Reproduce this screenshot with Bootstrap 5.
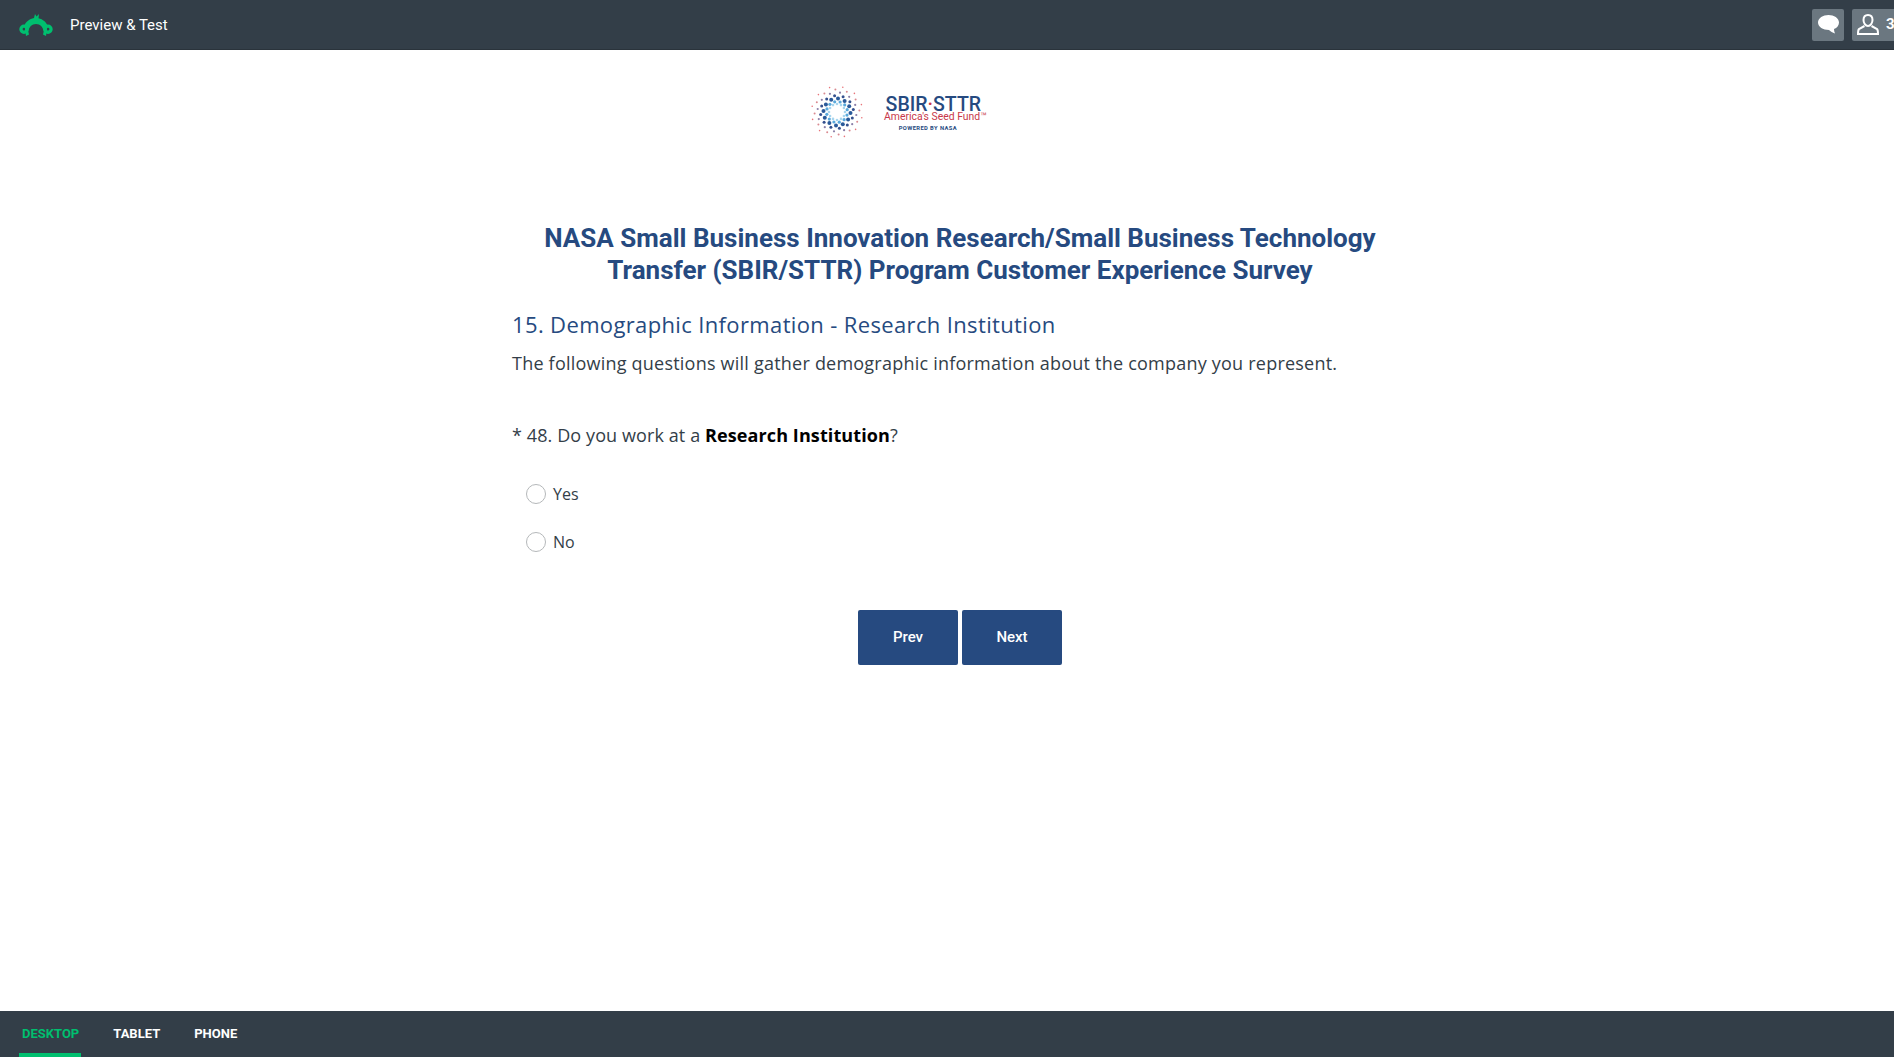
<!DOCTYPE html>
<html lang="en">
<head>
    <meta charset="UTF-8">
    <meta name="viewport" content="width=device-width, initial-scale=1.0">
    <title>Preview &amp; Test</title>
    <link href="https://cdn.jsdelivr.net/npm/bootstrap@5.3.0/dist/css/bootstrap.min.css" rel="stylesheet">
    <style>
        html, body { height: 100%; overflow: hidden; }
        body { font-family: "Open Sans", sans-serif; background: #fff; color: #333e48; }
        .page-frame { width: 1920px; height: 1057px; }
        .top-strip { height: 50px; background: #333e48; border-bottom: 1px solid #2a333b; padding-left: 18px; }
        .strip-title { font-family: Roboto, sans-serif; font-size: 15px; color: #fff; margin-left: 16px; margin-top: 1px; }
        .tool-btn { height: 32px; background: #6b7780; border-radius: 2px; color: #fff; }
        .tool-chat { width: 32px; margin-right: 8px; }
        .tool-people { width: 64px; margin-right: 4px; padding-left: 5px; font-family: Roboto, sans-serif; font-size: 15px; font-weight: 700; gap: 7px; }
        .exit-link { font-family: Roboto, sans-serif; font-size: 13px; color: #264a80; text-decoration: none; right: 0; top: 65px; width: 26px; }
        .logo-row { height: 134px; padding: 34px 0 0 809px; }
        .logo-text { margin-left: 19px; margin-top: 13px; text-align: center; }
        .logo-name { font-family: Roboto, sans-serif; font-size: 19.5px; line-height: 15px; font-weight: 500; color: #264a80; margin-right: 4px; }
        .logo-name i { color: #c8384a; font-style: normal; }
        .logo-tag { font-family: Roboto, sans-serif; font-size: 10.4px; line-height: 10px; color: #c8384a; white-space: nowrap; }
        .logo-sub { font-family: Roboto, sans-serif; font-size: 5.8px; line-height: 6px; font-weight: 700; color: #264a80; margin: 3px 15px 0 0; letter-spacing: .4px; }
        .survey-col { width: 896px; margin: 0 auto; }
        .survey-title { font-family: Roboto, sans-serif; font-size: 26px; line-height: 32px; font-weight: 700; color: #264a80; text-align: center; margin: 38px 0 0; }
        .page-heading { font-size: 22px; line-height: 28px; font-weight: 400; letter-spacing: .36px; color: #264a80; margin: 24px 0 0; }
        .page-intro { font-size: 18px; line-height: 26px; letter-spacing: .22px; color: #333e48; margin: 12px 0 0; }
        .question-line { font-size: 18px; line-height: 26px; letter-spacing: .1px; color: #333e48; margin: 46px 0 0; }
        .question-line b { color: #000; }
        .answers { margin: 36px 0 0 14px; gap: 28px; }
        .answer-row { height: 20px; gap: 7px; font-size: 16px; color: #333e48; }
        .radio-ring { width: 20px; height: 20px; border: 1.5px solid #b5b8ba; border-radius: 50%; background: #fff; }
        .nav-btns { margin-top: 58px; gap: 4px; }
        .survey-btn { width: 100px; height: 55px; background: #264a80; border: 0; border-radius: 2px; color: #fff; font-size: 15px; font-weight: 500; font-family: Roboto, sans-serif; }
        .survey-btn:hover { background: #264a80; color: #fff; }
        .bottom-strip { height: 46px; background: #333e48; padding-left: 19px; gap: 32px; }
        .device-tab { font-family: Roboto, sans-serif; font-size: 13px; font-weight: 700; color: #fff; text-decoration: none; line-height: 46px; height: 46px; }
        .device-tab.is-on { color: #00bf6f; border-bottom: 4px solid #00bf6f; padding: 0 2px 0 3px; }
        .device-tab.is-last { margin-left: 2px; }
    </style>
</head>
<body>
    <div class="page-frame d-flex flex-column position-relative">
        <header class="top-strip d-flex align-items-center flex-shrink-0">
            <svg width="36" height="24" viewBox="0 0 36 24">
                <path fill="#00bf6f" d="M17 1l1.500 2.500L21 1l-.5 4.200c4.500 1 7.800 4 9 7.300L28 23l-3-1.500.7-3c-.6-4.500-3.500-7.500-7.700-7.500s-7.100 3-7.700 7.500l.7 3L8 23 6.500 12.500c1.300-3.500 5-6.700 9.500-7.400z"/>
                <path fill="#00bf6f" fill-rule="evenodd" d="M6 11.500a4.700 4.700 0 1 0 0 9.400a4.700 4.700 0 1 0 0-9.400zM6 14.800a1.400 1.400 0 1 1 0 2.800a1.400 1.400 0 1 1 0-2.800zM30 11.500a4.700 4.700 0 1 0 0 9.400a4.700 4.700 0 1 0 0-9.400zM30 14.800a1.400 1.400 0 1 1 0 2.800a1.400 1.400 0 1 1 0-2.800z"/>
            </svg>
            <span class="strip-title">Preview &amp; Test</span>
            <div class="ms-auto d-flex">
                <div class="tool-btn tool-chat d-flex align-items-center justify-content-center">
                    <svg width="21" height="19" viewBox="0 0 21 19"><path fill="#fff" d="M10.500 0C16 0 21 3 21 7.500c0 3-2 5.300-5 6.500 0 1.500.3 3 1 4.500-2.500-.7-4.500-2-6-3.500C5 15 0 12 0 7.500 0 3 5 0 10.500 0z"/></svg>
                </div>
                <div class="tool-btn tool-people d-flex align-items-center">
                    <svg width="22" height="21" viewBox="0 0 22 21" fill="none" stroke="#fff" stroke-width="2"><path d="M11 1c3 0 4.500 2 4.500 5S13.500 12 11 12 6.500 9 6.500 6 8 1 11 1z"/><path d="M7.500 12L2 15c-1 1-1 3-1 5h20c0-2 0-4-1-5l-5.500-3"/></svg>
                    <span>3</span>
                </div>
            </div>
        </header>
        <a href="#" class="exit-link position-absolute">EXIT</a>
        <main class="flex-grow-1 overflow-hidden">
            <div class="logo-row d-flex align-items-start">
                <svg id="logoSwirl" width="56" height="56" viewBox="-28 -28 56 56"></svg>
                <div class="logo-text">
                    <div class="logo-name">SBIR<i>&middot;</i>STTR</div>
                    <div class="logo-tag">America's Seed Fund&#8482;</div>
                    <div class="logo-sub">POWERED BY NASA</div>
                </div>
            </div>
            <div class="survey-col">
                <h1 class="survey-title">NASA Small Business Innovation Research/Small Business Technology<br>Transfer (SBIR/STTR) Program Customer Experience Survey</h1>
                <h2 class="page-heading">15. Demographic Information - Research Institution</h2>
                <p class="page-intro">The following questions will gather demographic information about the company you represent.</p>
                <p class="question-line">* 48. Do you work at a <b>Research Institution</b>?</p>
                <div class="answers d-flex flex-column">
                    <div class="answer-row d-flex align-items-center"><span class="radio-ring"></span><span>Yes</span></div>
                    <div class="answer-row d-flex align-items-center"><span class="radio-ring"></span><span>No</span></div>
                </div>
                <div class="nav-btns d-flex justify-content-center">
                    <button class="btn survey-btn">Prev</button>
                    <button class="btn survey-btn">Next</button>
                </div>
            </div>
        </main>
        <footer class="bottom-strip d-flex flex-shrink-0">
            <a href="#" class="device-tab is-on">DESKTOP</a>
            <a href="#" class="device-tab">TABLET</a>
            <a href="#" class="device-tab is-last">PHONE</a>
        </footer>
    </div>
    <script src="https://cdn.jsdelivr.net/npm/bootstrap@5.3.0/dist/js/bootstrap.bundle.min.js"></script>
    <script>
        // swirl of dots for the logo, each arm bends as it goes out
        var rings = [[8, '#a8d6ee', 1.3], [10.500, '#5aa9dc', 1.6], [13.500, '#2a5a9a', 2], [16.500, '#34508e', 1.5], [19.500, '#8a7fa8', 1.1], [22.500, '#d98a90', 1], [25.500, '#e8747a', .8]];
        var out = '';
        rings.forEach(function(ring, r) {
            for (var i = 0; i < 12; i++) {
                var a = (i / 12) * Math.PI * 2 + r * 0.3;
                out += '<circle cx="' + (Math.cos(a) * ring[0]).toFixed(1) + '" cy="' + (Math.sin(a) * ring[0]).toFixed(1) + '" r="' + ring[2] + '" fill="' + ring[1] + '"/>';
            }
        });
        document.getElementById('logoSwirl').innerHTML = out;
    </script>
</body>
</html>
